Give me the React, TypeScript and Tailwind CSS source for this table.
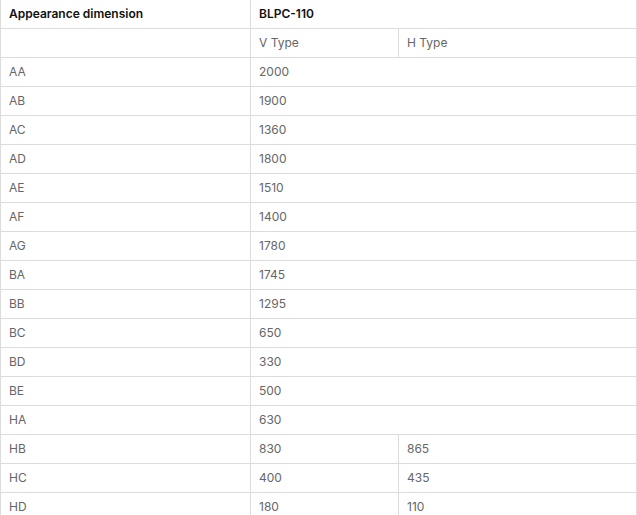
const rows: [string, string, string?][] = [
  ["AA", "2000"],
  ["AB", "1900"],
  ["AC", "1360"],
  ["AD", "1800"],
  ["AE", "1510"],
  ["AF", "1400"],
  ["AG", "1780"],
  ["BA", "1745"],
  ["BB", "1295"],
  ["BC", "650"],
  ["BD", "330"],
  ["BE", "500"],
  ["HA", "630"],
  ["HB", "830", "865"],
  ["HC", "400", "435"],
  ["HD", "180", "110"],
];

const cell = "border border-[#dcdcdc] px-2 h-[29px] align-middle";

export default function App() {
  return (
    <div className="h-[515px] w-[637px] overflow-hidden bg-white font-['Inter','Liberation_Sans',sans-serif] text-[12px]">
      <table className="-mt-px w-[636px] table-fixed border-collapse">
        <colgroup>
          <col className="w-[250px]" />
          <col className="w-[148px]" />
          <col className="w-[238px]" />
        </colgroup>
        <thead>
          <tr>
            <th className={`${cell} text-left font-semibold text-[#111]`}>Appearance dimension</th>
            <th colSpan={2} className={`${cell} text-left font-semibold text-[#111]`}>
              BLPC-110
            </th>
          </tr>
        </thead>
        <tbody className="text-[#666]">
          <tr>
            <td className={cell} />
            <td className={cell}>V Type</td>
            <td className={cell}>H Type</td>
          </tr>
          {rows.map(([k, v, h]) => (
            <tr key={k}>
              <td className={cell}>{k}</td>
              {h ? (
                <>
                  <td className={cell}>{v}</td>
                  <td className={cell}>{h}</td>
                </>
              ) : (
                <td colSpan={2} className={cell}>
                  {v}
                </td>
              )}
            </tr>
          ))}
        </tbody>
      </table>
    </div>
  );
}
